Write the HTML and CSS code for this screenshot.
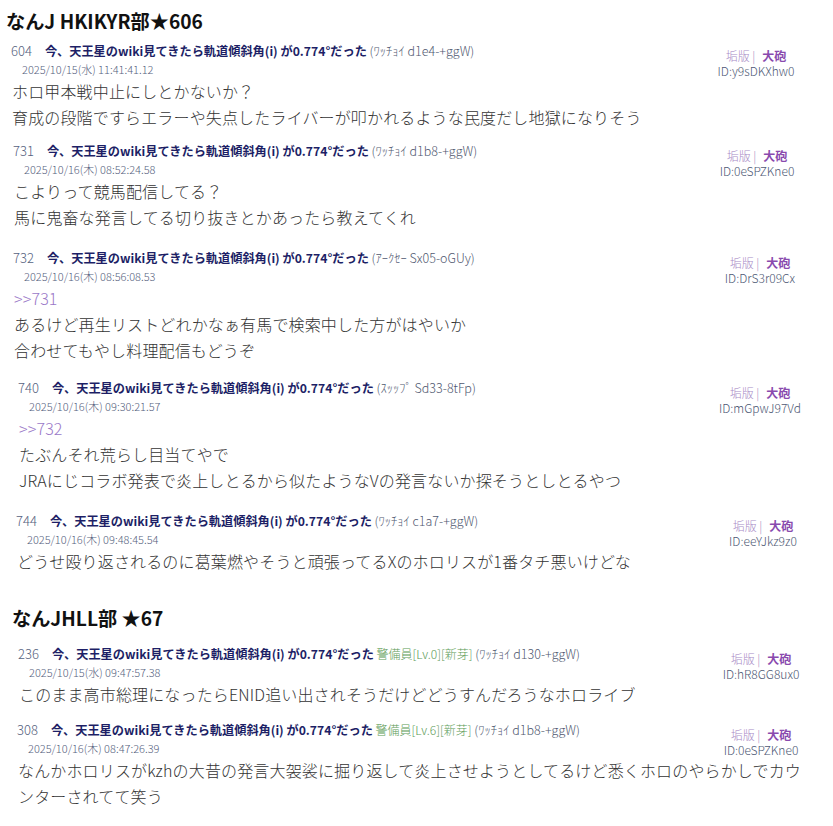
FILE: index.html
```html
<!DOCTYPE html>
<html lang="ja">
<head>
<meta charset="utf-8">
<title>スレッド</title>
<link rel="stylesheet" href="styles.css">
</head>
<body>
<main class="page">
  <section class="thread">
    <h2 class="thread-title">なんJ HKIKYR部★606</h2>

    <article class="post post--a">
      <div class="post-head">
        <div class="meta">
          <div class="line1"><span class="num">604</span><span class="subject">今、天王星のwiki見てきたら軌道傾斜角(i) が0.774°だった</span> <span class="name">(ﾜｯﾁｮｲ d1e4-+ggW)</span></div>
          <div class="date">2025/10/15(水) 11:41:41.12</div>
        </div>
        <div class="side"><div class="side-top"><span class="ban">垢版 |</span><span class="cannon">大砲</span></div><div class="uid">ID:y9sDKXhw0</div></div>
      </div>
      <div class="body">ホロ甲本戦中止にしとかないか？<br>育成の段階ですらエラーや失点したライバーが叩かれるような民度だし地獄になりそう</div>
    </article>

    <article class="post post--b">
      <div class="post-head">
        <div class="meta">
          <div class="line1"><span class="num">731</span><span class="subject">今、天王星のwiki見てきたら軌道傾斜角(i) が0.774°だった</span> <span class="name">(ﾜｯﾁｮｲ d1b8-+ggW)</span></div>
          <div class="date">2025/10/16(木) 08:52:24.58</div>
        </div>
        <div class="side"><div class="side-top"><span class="ban">垢版 |</span><span class="cannon">大砲</span></div><div class="uid">ID:0eSPZKne0</div></div>
      </div>
      <div class="body">こよりって競馬配信してる？<br>馬に鬼畜な発言してる切り抜きとかあったら教えてくれ</div>
    </article>

    <article class="post post--c">
      <div class="post-head">
        <div class="meta">
          <div class="line1"><span class="num">732</span><span class="subject">今、天王星のwiki見てきたら軌道傾斜角(i) が0.774°だった</span> <span class="name">(ｱｰｸｾｰ Sx05-oGUy)</span></div>
          <div class="date">2025/10/16(木) 08:56:08.53</div>
        </div>
        <div class="side"><div class="side-top"><span class="ban">垢版 |</span><span class="cannon">大砲</span></div><div class="uid">ID:DrS3r09Cx</div></div>
      </div>
      <div class="body"><span class="anchor">&gt;&gt;731</span><br>あるけど再生リストどれかなぁ有馬で検索中した方がはやいか<br>合わせてもやし料理配信もどうぞ</div>
    </article>

    <article class="post post--d">
      <div class="post-head">
        <div class="meta">
          <div class="line1"><span class="num">740</span><span class="subject">今、天王星のwiki見てきたら軌道傾斜角(i) が0.774°だった</span> <span class="name">(ｽｯｯﾌﾟ Sd33-8tFp)</span></div>
          <div class="date">2025/10/16(木) 09:30:21.57</div>
        </div>
        <div class="side"><div class="side-top"><span class="ban">垢版 |</span><span class="cannon">大砲</span></div><div class="uid">ID:mGpwJ97Vd</div></div>
      </div>
      <div class="body"><span class="anchor">&gt;&gt;732</span><br>たぶんそれ荒らし目当てやで<br>JRAにじコラボ発表で炎上しとるから似たようなVの発言ないか探そうとしとるやつ</div>
    </article>

    <article class="post post--e">
      <div class="post-head">
        <div class="meta">
          <div class="line1"><span class="num">744</span><span class="subject">今、天王星のwiki見てきたら軌道傾斜角(i) が0.774°だった</span> <span class="name">(ﾜｯﾁｮｲ c1a7-+ggW)</span></div>
          <div class="date">2025/10/16(木) 09:48:45.54</div>
        </div>
        <div class="side"><div class="side-top"><span class="ban">垢版 |</span><span class="cannon">大砲</span></div><div class="uid">ID:eeYJkz9z0</div></div>
      </div>
      <div class="body">どうせ殴り返されるのに葛葉燃やそうと頑張ってるXのホロリスが1番タチ悪いけどな</div>
    </article>
  </section>

  <section class="thread thread--second">
    <h2 class="thread-title">なんJHLL部 ★67</h2>

    <article class="post post--f">
      <div class="post-head">
        <div class="meta">
          <div class="line1"><span class="num">236</span><span class="subject">今、天王星のwiki見てきたら軌道傾斜角(i) が0.774°だった</span> <span class="guard">警備員[Lv.0][新芽]</span> <span class="name">(ﾜｯﾁｮｲ d130-+ggW)</span></div>
          <div class="date">2025/10/15(水) 09:47:57.38</div>
        </div>
        <div class="side"><div class="side-top"><span class="ban">垢版 |</span><span class="cannon">大砲</span></div><div class="uid">ID:hR8GG8ux0</div></div>
      </div>
      <div class="body">このまま高市総理になったらENID追い出されそうだけどどうすんだろうなホロライブ</div>
    </article>

    <article class="post post--g">
      <div class="post-head">
        <div class="meta">
          <div class="line1"><span class="num">308</span><span class="subject">今、天王星のwiki見てきたら軌道傾斜角(i) が0.774°だった</span> <span class="guard">警備員[Lv.6][新芽]</span> <span class="name">(ﾜｯﾁｮｲ d1b8-+ggW)</span></div>
          <div class="date">2025/10/16(木) 08:47:26.39</div>
        </div>
        <div class="side"><div class="side-top"><span class="ban">垢版 |</span><span class="cannon">大砲</span></div><div class="uid">ID:0eSPZKne0</div></div>
      </div>
      <div class="body">なんかホロリスがkzhの大昔の発言大袈裟に掘り返して炎上させようとしてるけど悉くホロのやらかしでカウンターされてて笑う</div>
    </article>
  </section>
</main>
</body>
</html>
```

FILE: styles.css
```css
html, body {
  margin: 0;
  padding: 0;
  background: #ffffff;
}

body {
  font-family: "Noto Sans CJK JP", "Noto Sans", sans-serif;
  color: #333333;
}

.page {
  padding: 8px 0 0 0;
}

.thread-title {
  margin: 0;
  padding-left: 6px;
  font-size: 19.2px;
  line-height: 26px;
  font-weight: 700;
  color: #111111;
}

.thread--second {
  margin-top: 31px;
}

.thread--second .thread-title {
  padding-left: 12px;
}

.post {
  padding-left: var(--off, 11px);
  margin-top: var(--gap, 10px);
}

.post-head {
  display: flex;
  align-items: flex-start;
}

.meta {
  flex: 1;
  min-width: 0;
}

.line1 {
  font-size: 12px;
  line-height: 20px;
  white-space: nowrap;
}

.num {
  font-size: 13px;
  font-weight: 300;
  color: #56627e;
  margin-right: 13px;
}

.subject {
  font-size: 12.2px;
  font-weight: 700;
  color: #1d1f66;
}

.name {
  font-size: 12.5px;
  font-weight: 300;
  color: #4f5870;
}

.guard {
  font-size: 12px;
  font-weight: 300;
  color: #5b9a55;
}

.date {
  padding-left: 11px;
  font-size: 11px;
  line-height: 17px;
  font-weight: 300;
  color: #56627e;
}

.side {
  width: 96px;
  margin-top: 7px;
  margin-right: var(--side, 29px);
  text-align: center;
  font-size: 12px;
  line-height: 15px;
  font-weight: 300;
}

.ban {
  color: #a88ac6;
}

.cannon {
  margin-left: 7px;
  font-weight: 700;
  color: #8a4aae;
}

.uid {
  color: #4d5874;
}

.body {
  padding-left: 1px;
  padding-right: 28px;
  font-size: 16px;
  line-height: 26px;
  font-weight: 300;
  letter-spacing: 0.15px;
  color: #333333;
}

.anchor {
  color: #9a78c8;
}

.post--a { --off: 11px; --gap: 7px; --side: 29px; }
.post--b { --off: 13px; --gap: 11px; --side: 28px; }
.post--c { --off: 13px; --gap: 18px; --side: 25px; }
.post--d { --off: 18px; --gap: 15px; --side: 25px; }
.post--e { --off: 16px; --gap: 18px; --side: 22px; }
.post--f { --off: 18px; --gap: 13px; --side: 24px; }
.post--g { --off: 17px; --gap: 13px; --side: 24px; }
```
